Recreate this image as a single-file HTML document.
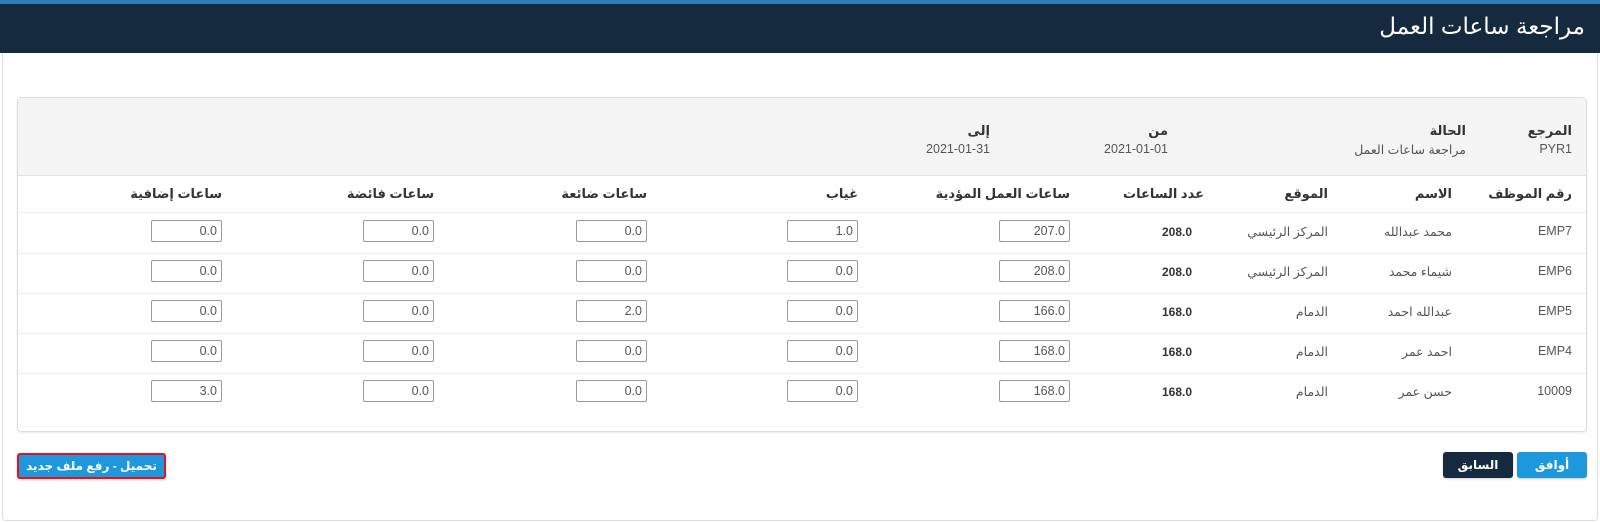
<!DOCTYPE html>
<html dir="rtl"><head><meta charset="utf-8"><style>
*{margin:0;padding:0;box-sizing:border-box}
body{width:1600px;height:522px;background:#fff;font-family:"Liberation Sans","DejaVu Sans",sans-serif;color:#444;font-size:13px;position:relative;overflow:hidden}
.abs{position:absolute;white-space:nowrap}
.frame{position:absolute;left:2px;top:0;width:1596px;height:521px;border:1px solid #ddd;border-top:none;border-radius:0 0 4px 4px}
.stripe{position:absolute;left:0;top:0;width:1600px;height:4px;background:#2b7db3}
.bar{position:absolute;left:0;top:4px;width:1600px;height:49px;background:#152a3e}
.title{color:#fff;font-size:23px;right:15px;top:13px}
.card{position:absolute;left:17px;top:97px;width:1570px;height:335px;border:1px solid #ddd;border-radius:4px;box-shadow:0 1px 2px rgba(0,0,0,.08)}
.gray{position:absolute;left:18px;top:98px;width:1568px;height:78px;background:#f4f4f4;border-bottom:1px solid #e3e3e3}
.lab{font-weight:bold;color:#333;font-size:13px}
.val{color:#555;font-size:12.5px}
.hd{font-weight:bold;color:#333;font-size:13px;top:186px}
.line{position:absolute;left:18px;width:1568px;height:1px;background:#eee}
.inp{position:absolute;width:71px;height:22px;border:1px solid #999;border-radius:2px;text-align:right;padding-right:4px;font-size:12.5px;line-height:20px;color:#555;background:#fff}
.b{font-weight:bold;color:#333;font-size:12px}
.btn{position:absolute;height:26px;border-radius:3px;color:#fff;font-weight:bold;font-size:12px;text-align:center;line-height:26px;box-shadow:0 1px 2px rgba(0,0,0,.2)}
</style></head><body>
<div class="frame"></div>
<div class="stripe"></div>
<div class="bar"></div>
<div class="abs title">مراجعة ساعات العمل</div>
<div class="card"></div>
<div class="gray"></div>
<div class="abs lab" style="right:28px;top:123px">المرجع</div>
<div class="abs val" style="right:28px;top:142px">PYR1</div>
<div class="abs lab" style="right:134px;top:123px">الحالة</div>
<div class="abs val" style="right:134px;top:142px">مراجعة ساعات العمل</div>
<div class="abs lab" style="right:432px;top:123px">من</div>
<div class="abs val" style="right:432px;top:142px">2021-01-01</div>
<div class="abs lab" style="right:610px;top:123px">إلى</div>
<div class="abs val" style="right:610px;top:142px">2021-01-31</div>

<div class="abs hd" style="right:28px">رقم الموظف</div>
<div class="abs hd" style="right:148px">الاسم</div>
<div class="abs hd" style="right:272px">الموقع</div>
<div class="abs hd" style="right:396px">عدد الساعات</div>
<div class="abs hd" style="right:530px">ساعات العمل المؤدية</div>
<div class="abs hd" style="right:742px">غياب</div>
<div class="abs hd" style="right:953px">ساعات ضائعة</div>
<div class="abs hd" style="right:1166px">ساعات فائضة</div>
<div class="abs hd" style="right:1378px">ساعات إضافية</div>

<div class="line" style="top:212px"></div>
<div class="line" style="top:253px"></div>
<div class="line" style="top:293px"></div>
<div class="line" style="top:333px"></div>
<div class="line" style="top:373px"></div>

<!-- rows -->
<div class="abs val" style="right:28px;top:224px">EMP7</div>
<div class="abs val" style="right:148px;top:224px">محمد عبدالله</div>
<div class="abs val" style="right:272px;top:224px">المركز الرئيسي</div>
<div class="abs b" style="right:408px;top:225px">208.0</div>
<div class="inp" style="left:999px;top:220px">207.0</div>
<div class="inp" style="left:787px;top:220px">1.0</div>
<div class="inp" style="left:576px;top:220px">0.0</div>
<div class="inp" style="left:363px;top:220px">0.0</div>
<div class="inp" style="left:151px;top:220px">0.0</div>

<div class="abs val" style="right:28px;top:264px">EMP6</div>
<div class="abs val" style="right:148px;top:264px">شيماء محمد</div>
<div class="abs val" style="right:272px;top:264px">المركز الرئيسي</div>
<div class="abs b" style="right:408px;top:265px">208.0</div>
<div class="inp" style="left:999px;top:260px">208.0</div>
<div class="inp" style="left:787px;top:260px">0.0</div>
<div class="inp" style="left:576px;top:260px">0.0</div>
<div class="inp" style="left:363px;top:260px">0.0</div>
<div class="inp" style="left:151px;top:260px">0.0</div>

<div class="abs val" style="right:28px;top:304px">EMP5</div>
<div class="abs val" style="right:148px;top:304px">عبدالله احمد</div>
<div class="abs val" style="right:272px;top:304px">الدمام</div>
<div class="abs b" style="right:408px;top:305px">168.0</div>
<div class="inp" style="left:999px;top:300px">166.0</div>
<div class="inp" style="left:787px;top:300px">0.0</div>
<div class="inp" style="left:576px;top:300px">2.0</div>
<div class="inp" style="left:363px;top:300px">0.0</div>
<div class="inp" style="left:151px;top:300px">0.0</div>

<div class="abs val" style="right:28px;top:344px">EMP4</div>
<div class="abs val" style="right:148px;top:344px">احمد عمر</div>
<div class="abs val" style="right:272px;top:344px">الدمام</div>
<div class="abs b" style="right:408px;top:345px">168.0</div>
<div class="inp" style="left:999px;top:340px">168.0</div>
<div class="inp" style="left:787px;top:340px">0.0</div>
<div class="inp" style="left:576px;top:340px">0.0</div>
<div class="inp" style="left:363px;top:340px">0.0</div>
<div class="inp" style="left:151px;top:340px">0.0</div>

<div class="abs val" style="right:28px;top:384px">10009</div>
<div class="abs val" style="right:148px;top:384px">حسن عمر</div>
<div class="abs val" style="right:272px;top:384px">الدمام</div>
<div class="abs b" style="right:408px;top:385px">168.0</div>
<div class="inp" style="left:999px;top:380px">168.0</div>
<div class="inp" style="left:787px;top:380px">0.0</div>
<div class="inp" style="left:576px;top:380px">0.0</div>
<div class="inp" style="left:363px;top:380px">0.0</div>
<div class="inp" style="left:151px;top:380px">3.0</div>

<div class="btn" style="left:1517px;top:452px;width:70px;background:#1e98dd">أوافق</div>
<div class="btn" style="left:1443px;top:452px;width:70px;background:#152a3e">السابق</div>
<div class="btn" style="left:17px;top:453px;width:149px;background:#1e98dd;border:2px solid #e8101a;line-height:22px">تحميل - رفع ملف جديد</div>
</body></html>
